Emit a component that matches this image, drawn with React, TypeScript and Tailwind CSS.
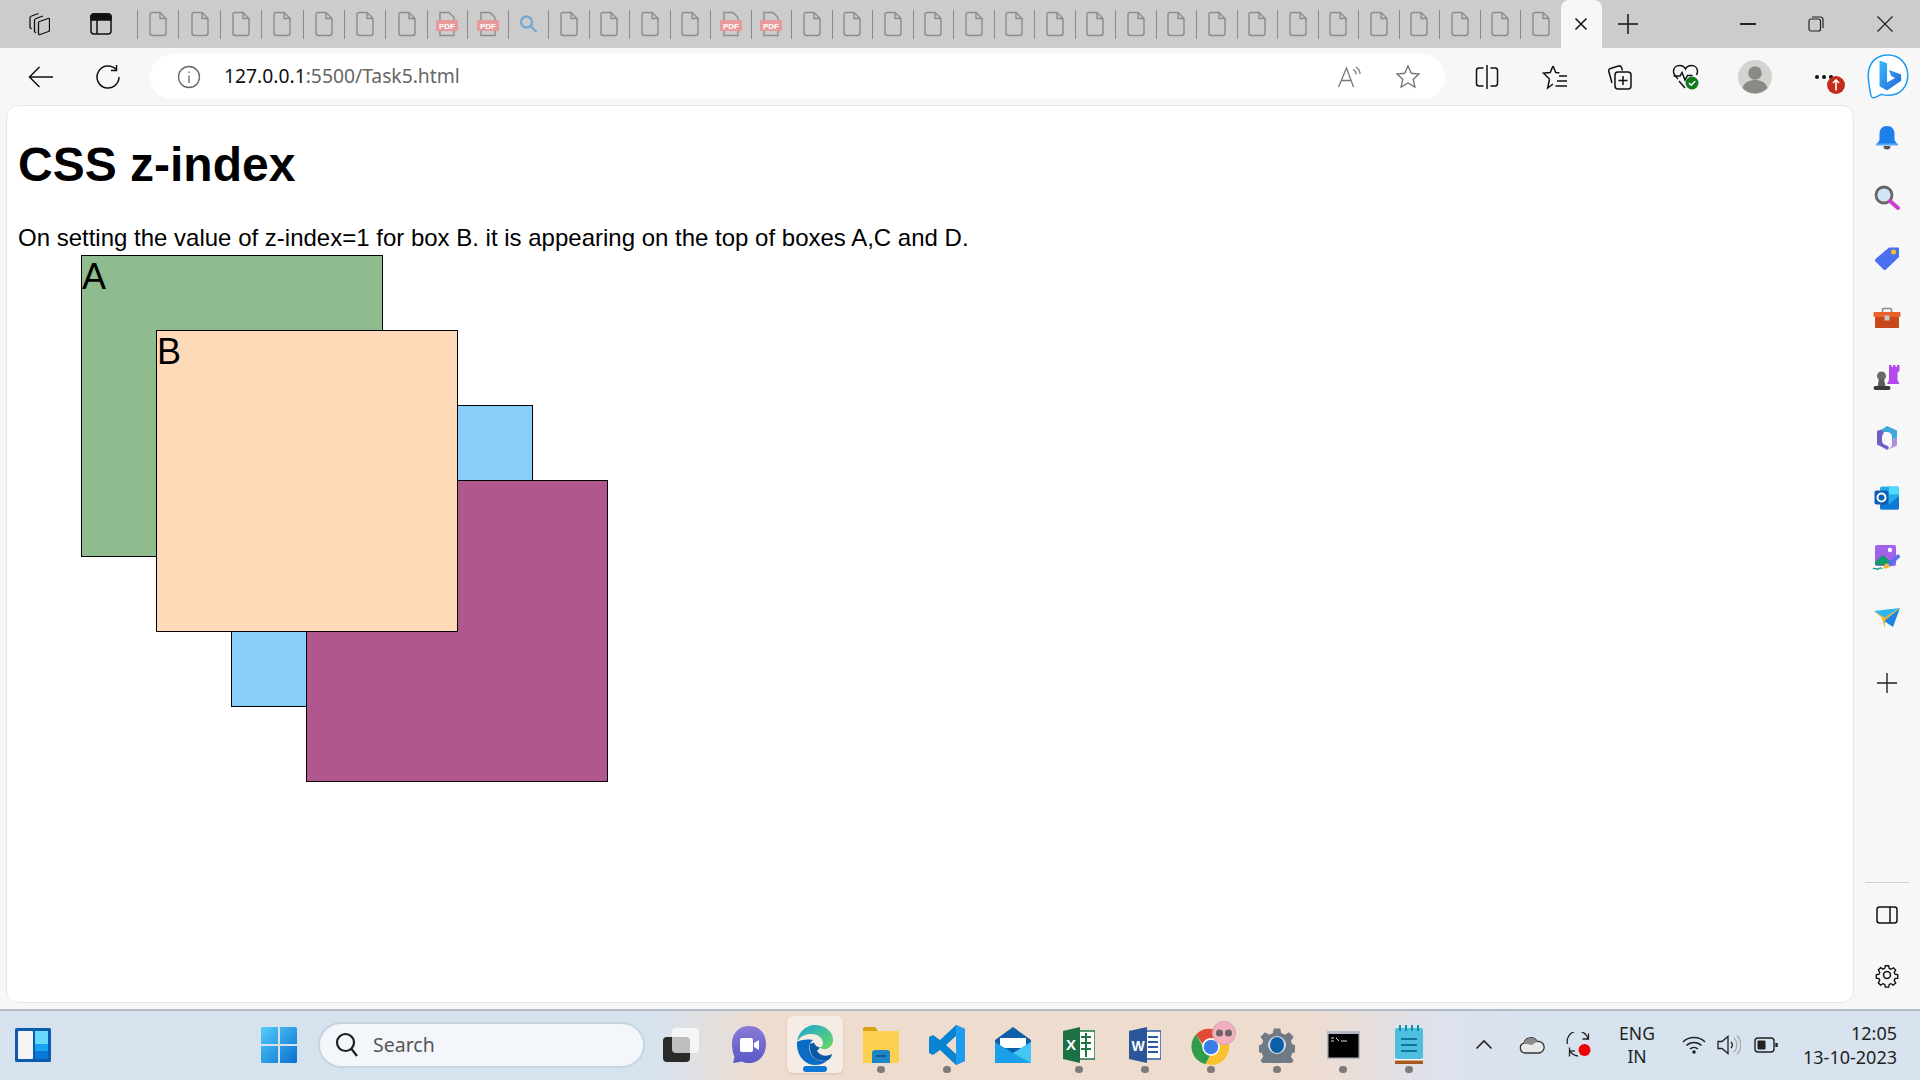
const ui = { fontFamily: '"Noto Sans", "Open Sans", sans-serif' }

type Tab = 'file' | 'pdf' | 'find'
const tabs: Tab[] = [
  ...Array<Tab>(7).fill('file'),
  'pdf',
  'pdf',
  'find',
  ...Array<Tab>(4).fill('file'),
  'pdf',
  'pdf',
  ...Array<Tab>(19).fill('file'),
]

function FileIcon() {
  return (
    <svg width="20" height="26" viewBox="0 0 20 26" fill="none" stroke="#8c8c8c" strokeWidth="1.4">
      <path d="M4 1.500h8l6 6V22a2.500 2.500 0 0 1-2.500 2.500h-11A2.500 2.500 0 0 1 2 22V3.500a2 2 0 0 1 2-2z" />
      <path d="M12 1.500v6h6" />
    </svg>
  )
}

function PdfIcon() {
  return (
    <svg width="24" height="26" viewBox="0 0 24 26" fill="none">
      <path d="M5 1.500h9l5 5V24.500H5z" stroke="#8c8c8c" strokeWidth="1.4" />
      <rect x="1" y="9" width="22" height="11" rx="1" fill="#e89a9a" />
      <text x="12" y="17.500" textAnchor="middle" fontSize="8" fontWeight="700" fill="#fff" fontFamily="Liberation Sans">PDF</text>
    </svg>
  )
}

function FindIcon() {
  return (
    <svg width="20" height="22" viewBox="0 0 20 22" fill="none" stroke="#78a9d1" strokeWidth="2.4">
      <circle cx="8.500" cy="9" r="5.500" />
      <path d="M13 13.500l5 5" strokeLinecap="round" />
    </svg>
  )
}

function TabStrip() {
  return (
    <div className="flex h-12 items-center bg-[#cccccc]">
      <div className="flex w-[137px] items-center gap-[40px] pl-[26px]">
        <svg width="24" height="24" viewBox="0 0 24 24" fill="none" stroke="#111" strokeWidth="1.300">
          <path d="M13.500 9.500L22 6.500c1-.3 1.500.2 1.500 1V18c0 .8-.4 1.300-1 1.500L14 22.500c-1 .3-1.500-.2-1.500-1V11c0-.8.3-1.200 1-1.500z" />
          <path d="M10 21L8.500 19.500V8.500c0-1 .5-1.700 1.500-2L17 4" />
          <path d="M5.500 17L4 15.500V6c0-1 .5-1.700 1.500-2L12.500 1.500" />
        </svg>
        <svg width="22" height="22" viewBox="0 0 22 22" fill="none" stroke="#111" strokeWidth="1.500">
          <rect x="1" y="1" width="20" height="20" rx="3" />
          <path d="M1 3.500a2.500 2.500 0 0 1 2.500-2.500h15A2.500 2.500 0 0 1 21 3.500V7H1z" fill="#111" />
          <path d="M7 7v14" />
        </svg>
      </div>
      <div className="flex h-full">
        {tabs.map((t, i) => (
          <div key={i} className={`flex h-full items-center ${i < 7 ? 'w-[41.4px]' : 'w-[40.5px]'}`}>
            <div className="h-[29px] w-px bg-[#8b8b8b]" />
            <div className="flex flex-1 justify-center">
              {t === 'file' && <FileIcon />}
              {t === 'pdf' && <PdfIcon />}
              {t === 'find' && <FindIcon />}
            </div>
          </div>
        ))}
      </div>
      <div className="flex h-full w-[41px] items-center justify-center rounded-t-lg bg-[#f7f7f7]">
        <svg width="14" height="14" viewBox="0 0 14 14" stroke="#111" strokeWidth="1.500">
          <path d="M1.500 1.500l11 11M12.500 1.500l-11 11" />
        </svg>
      </div>
      <div className="flex w-[52px] justify-center">
        <svg width="22" height="22" viewBox="0 0 22 22" stroke="#111" strokeWidth="1.500">
          <path d="M11 1v20M1 11h20" />
        </svg>
      </div>
      <div className="ml-[67px] flex w-[54px] justify-center">
        <div className="h-[1.500px] w-[16px] bg-[#222]" />
      </div>
      <div className="ml-[14px] flex w-[54px] justify-center">
        <svg width="16" height="16" viewBox="0 0 16 16" fill="none" stroke="#222" strokeWidth="1.200">
          <rect x="1" y="3" width="11.500" height="12" rx="2" />
          <path d="M4 1h8.500A2.500 2.500 0 0 1 15 3.500V12" />
        </svg>
      </div>
      <div className="ml-[15px] flex w-[54px] justify-center">
        <svg width="18" height="18" viewBox="0 0 18 18" stroke="#222" strokeWidth="1.200">
          <path d="M1.500 1.500l15 15M16.500 1.500l-15 15" />
        </svg>
      </div>
    </div>
  )
}

function ToolBar() {
  return (
    <div className="flex h-[57px] items-start bg-[#f7f7f7] pt-[6px]">
      <div className="flex h-[45px] w-[82px] items-center justify-center">
        <svg width="26" height="24" viewBox="0 0 26 24" fill="none" stroke="#111" strokeWidth="1.500">
          <path d="M25 12H2M11.500 2L1.500 12l10 10" />
        </svg>
      </div>
      <div className="flex h-[45px] w-[52px] items-center justify-center">
        <svg width="26" height="26" viewBox="0 0 26 26" fill="none" stroke="#111" strokeWidth="1.500">
          <path d="M21 5.500A11 11 0 1 0 24 13" />
          <path d="M21.500 1v5.500H16" />
        </svg>
      </div>
      <div className="ml-[16px] flex h-[45px] w-[1295px] items-center rounded-full bg-white pl-[27px] pr-[24px]">
        <svg width="24" height="24" viewBox="0 0 24 24" fill="none" stroke="#666" strokeWidth="1.300">
          <circle cx="12" cy="12" r="10.500" />
          <path d="M12 10.500V18" />
          <path d="M12 6.500v1.500" />
        </svg>
        <div className="ml-[23px] flex-1 text-[19.300px] text-[#666]" style={ui}>
          <span className="text-[#111]">127.0.0.1</span>:5500/Task5.html
        </div>
        <svg width="26" height="24" viewBox="0 0 26 24" fill="none" stroke="#777" strokeWidth="1.300">
          <path d="M1.500 22L9.500 3l7 19M4.500 15.500h10" />
          <path d="M16 4.500a5 5 0 0 1 3 5M19 2a8.500 8.500 0 0 1 4 7" />
        </svg>
        <svg className="ml-[32px]" width="26" height="25" viewBox="0 0 26 25" fill="none" stroke="#777" strokeWidth="1.400">
          <path d="M13 2l3.300 7.300 7.700.8-5.800 5.200 1.700 7.700L13 19l-6.900 4 1.700-7.700L2 10.100l7.700-.8z" />
        </svg>
      </div>
      <div className="flex h-[45px] w-[84px] items-center justify-center">
        <svg width="24" height="26" viewBox="0 0 24 26" fill="none" stroke="#111" strokeWidth="1.500">
          <path d="M12 1v24" />
          <path d="M8.500 4H4a2.500 2.500 0 0 0-2.500 2.500v13A2.500 2.500 0 0 0 4 22h4.500" />
          <path d="M15.500 4H20a2.500 2.500 0 0 1 2.500 2.500v13A2.500 2.500 0 0 1 20 22h-4.500" />
        </svg>
      </div>
      <div className="flex h-[45px] w-[52px] items-center justify-center">
        <svg width="26" height="26" viewBox="0 0 26 26" fill="none" stroke="#111" strokeWidth="1.500">
          <path d="M11 2l2.800 6.500 3.700.3M7.500 15l-1.800 9L11 20M11 2L8.200 8.500 1.500 9.200l6 5.800" />
          <path d="M17 12h8M15 17h10M13.500 22h11.500" />
        </svg>
      </div>
      <div className="flex h-[45px] w-[78px] items-center justify-center">
        <svg width="26" height="28" viewBox="0 0 26 28" fill="none" stroke="#111" strokeWidth="1.500">
          <rect x="8" y="9" width="16" height="17" rx="3" />
          <path d="M16 13v9M11.500 17.500h9" />
          <path d="M5 20L1.800 8.500c-.4-1.500.3-2.700 1.700-3l8-2.500c1.400-.4 2.500.3 3 1.500l1 3" />
        </svg>
      </div>
      <div className="flex h-[45px] w-[54px] items-center justify-center">
        <svg width="28" height="28" viewBox="0 0 28 28" fill="none">
          <path d="M6 16C3 13 1.500 11.500 1.500 8.500 1.500 5 4 2.500 7.500 2.500c2.500 0 5 1.500 6 3.500 1-2 3.500-3.500 6-3.500 3.500 0 6 2.500 6 6 0 1.500-.5 2.500-1 3.500" stroke="#111" strokeWidth="1.500" />
          <path d="M1.500 13H8l2-3.500 3 7.500 2.500-4.500h5M7 18l6 7" stroke="#111" strokeWidth="1.500" />
          <circle cx="20" cy="20" r="6.500" fill="#0f7b1d" />
          <path d="M17 20l2.200 2.200 4-4" stroke="#fff" strokeWidth="1.500" />
        </svg>
      </div>
      <div className="flex h-[45px] w-[84px] items-center justify-center">
        <svg width="34" height="34" viewBox="0 0 34 34">
          <circle cx="17" cy="17" r="17" fill="#d5d3cf" />
          <circle cx="17" cy="13" r="6.800" fill="#8b8986" />
          <path d="M4.500 28c2-6 7-8 12.500-8s10.500 2 12.500 8A17 17 0 0 1 4.500 28z" fill="#8b8986" />
        </svg>
      </div>
      <div className="relative flex h-[45px] w-[36px] items-center justify-end">
        <div className="flex gap-[3px]">
          <div className="h-[4px] w-[4px] rounded-full bg-[#111]" />
          <div className="h-[4px] w-[4px] rounded-full bg-[#111]" />
          <div className="h-[4px] w-[4px] rounded-full bg-[#111]" />
        </div>
        <div className="absolute left-[30px] top-[22px] flex h-[18px] w-[18px] items-center justify-center rounded-full bg-[#c42b1c]">
          <svg width="8" height="12" viewBox="0 0 8 12" fill="none" stroke="#fff" strokeWidth="1.600">
            <path d="M4 11.500V1M1 4l3-3 3 3" />
          </svg>
        </div>
      </div>
      <div className="ml-[27px] flex h-[45px] w-[56px] items-center justify-center">
        <svg width="46" height="47" viewBox="0 0 46 50">
          <defs>
            <linearGradient id="bingFill" x1="0" y1="0" x2="1" y2="1">
              <stop offset="0" stopColor="#37bdf8" />
              <stop offset="1" stopColor="#2563d9" />
            </linearGradient>
          </defs>
          <path d="M23 2C10 2 2 11 2 24c0 8 2 17 3 22 1 2 3 2 5 1l6-3c2 .5 4.500 1 7 1 13 0 21-9 21-21S36 2 23 2z" fill="#fff" stroke="#1d9bf0" strokeWidth="1.600" />
          <path d="M14 8l8 2.800v20.700l8.500-5-4-2-2.500-6.500 13 5v6.500L22 40l-8-4.500z" fill="url(#bingFill)" />
        </svg>
      </div>
    </div>
  )
}

function Box({ label, className }: { label?: string; className: string }) {
  return (
    <div className={`col-start-1 row-start-1 h-[302px] w-[302px] border border-black text-[36px] leading-[41px] ${className}`}>
      {label}
    </div>
  )
}

function Page() {
  return (
    <div className="mb-[6px] ml-[6px] w-[1848px] rounded-xl border border-[#e6e6e6] bg-white pl-[11px]" style={{ fontFamily: '"Liberation Sans", Arial, sans-serif' }}>
      <h1 className="mt-[31px] text-[48px] font-bold leading-[55px] text-black">CSS z-index</h1>
      <p className="mt-[32px] text-[24px] leading-[28px] text-black">
        On setting the value of z-index=1 for box B. it is appearing on the top of boxes A,C and D.
      </p>
      <div className="mt-[3px] grid w-fit">
        <Box label="A" className="ml-[63px] bg-[#8fbc8f]" />
        <Box className="ml-[213px] mt-[150px] bg-[#87cefa]" />
        <Box className="ml-[288px] mt-[225px] bg-[#b0578d]" />
        <Box label="B" className="relative z-10 ml-[138px] mt-[75px] bg-[#ffdab9]" />
      </div>
    </div>
  )
}

function SideIcon({ children }: { children: React.ReactNode }) {
  return <div className="flex h-[60px] items-center justify-center">{children}</div>
}

function SideBar() {
  return (
    <div className="flex w-[66px] flex-col bg-[#f7f7f7] pt-[3px]">
      <SideIcon>
        <svg width="24" height="26" viewBox="0 0 24 26">
          <path d="M12 1c-5 0-7.500 3.500-7.500 8v6L2 19h20l-2.500-4V9c0-4.500-2.500-8-7.500-8z" fill="#1d80ea" />
          <rect x="1" y="18.500" width="22" height="2" fill="#5aa6f2" />
          <path d="M8.500 21a3.500 3.500 0 0 0 7 0z" fill="#555" />
        </svg>
      </SideIcon>
      <SideIcon>
        <svg width="26" height="26" viewBox="0 0 26 26">
          <circle cx="10" cy="10" r="8" fill="#cfe6f5" stroke="#666" strokeWidth="2.800" />
          <path d="M16 16l8 7" stroke="#c93fd0" strokeWidth="4" strokeLinecap="round" />
        </svg>
      </SideIcon>
      <SideIcon>
        <svg width="26" height="26" viewBox="0 0 26 26">
          <path d="M15 2.500h9a1 1 0 0 1 1 1V12L12 24.500a2 2 0 0 1-2.500 0L1.500 16.500a2 2 0 0 1 0-2.500z" fill="#4b6ff0" />
          <circle cx="19.500" cy="7" r="2.500" fill="#f6c21c" />
        </svg>
      </SideIcon>
      <SideIcon>
        <svg width="28" height="22" viewBox="0 0 28 22">
          <path d="M9.500 5V2.500a1 1 0 0 1 1-1h7a1 1 0 0 1 1 1V5" fill="none" stroke="#8c8c8c" strokeWidth="1.600" />
          <rect x="0.500" y="5" width="27" height="5" rx="1" fill="#e8622c" />
          <rect x="2" y="10" width="24" height="11" rx="1" fill="#c8471b" />
          <rect x="11.500" y="8.500" width="5" height="5" fill="#c9c9c9" />
        </svg>
      </SideIcon>
      <SideIcon>
        <svg width="28" height="28" viewBox="0 0 28 28">
          <path d="M16 1h2.500v2H20V1h2.500v2H24V1h2.500v6l-2 1.500V16l2 4H14l2-4V8.500L16 7z" fill="#b348ec" />
          <circle cx="8.500" cy="12" r="4.500" fill="#6a6a6a" />
          <path d="M6 15h5l1.500 7.500h-8z" fill="#5a5a5a" />
          <rect x="0.500" y="22" width="17" height="4" rx="2" fill="#3a3a3a" />
        </svg>
      </SideIcon>
      <SideIcon>
        <svg width="26" height="26" viewBox="0 0 26 26">
          <path d="M13 1l10 4.500v7l-5 2.500v-3.500a5 5 0 0 0-5-4.500H8l-1-2z" fill="#3fa7dc" />
          <path d="M23 12.500v8L13 25l-3-1.500h5a5 5 0 0 0 3-4.500v-4z" fill="#b28ee0" />
          <path d="M3 6l4-1.500 3 3.500a5 5 0 0 0-2 4v3.500a5 5 0 0 0 5 5l2 2-2 2-10-5V6z" fill="#6f5fc4" />
        </svg>
      </SideIcon>
      <SideIcon>
        <svg width="26" height="26" viewBox="0 0 26 26">
          <rect x="6" y="1.500" width="19" height="23" rx="2" fill="#28a8ea" />
          <rect x="15" y="1.500" width="10" height="8" fill="#50d9ff" />
          <path d="M6 13l9.500 6L25 11v12a1.500 1.500 0 0 1-1.500 1.500H7.500A1.500 1.500 0 0 1 6 23z" fill="#0f78d4" />
          <rect x="0.500" y="5.500" width="14" height="14" rx="2" fill="#0a5fb4" />
          <circle cx="7.500" cy="12.500" r="4" fill="none" stroke="#fff" strokeWidth="2" />
        </svg>
      </SideIcon>
      <SideIcon>
        <svg width="30" height="28" viewBox="0 0 30 28">
          <rect x="3" y="1" width="21" height="21" rx="2" fill="#a162ea" />
          <path d="M3 18l8-7 8 7v3H3z" fill="#0e9a6c" />
          <circle cx="18" cy="6" r="2.200" fill="#fff" />
          <path d="M15 20l11-10 2.500 2.500L18 23z" fill="#5570e8" />
          <path d="M13 20c2-1 4 0 5 2-2 3-5 3-7 2 1-1 1-3 2-4z" fill="#f1b53a" />
          <path d="M1 25c2-2 3 1 5 0s3-2 4 0" fill="none" stroke="#10a37f" strokeWidth="1.400" />
        </svg>
      </SideIcon>
      <SideIcon>
        <svg width="28" height="22" viewBox="0 0 28 22">
          <path d="M1 4L27 1 11 11z" fill="#2eb5f0" />
          <path d="M27 1L20 20 11 14z" fill="#1a86e0" />
          <path d="M11 11l16-10L11 14l1 7-3-10z" fill="#f0a21c" />
          <path d="M1 4l8 7 3 10 0-10z" fill="#f7b733" />
        </svg>
      </SideIcon>
      <div className="mt-[5px]">
        <SideIcon>
          <svg width="20" height="20" viewBox="0 0 20 20" stroke="#222" strokeWidth="1.400">
            <path d="M10 0v20M0 10h20" />
          </svg>
        </SideIcon>
      </div>
      <div className="mx-[11px] mt-[169px] h-px bg-[#cfcfcf]" />
      <div className="mt-[2px]">
        <SideIcon>
          <svg width="22" height="20" viewBox="0 0 22 20" fill="none" stroke="#111" strokeWidth="1.500">
            <rect x="1" y="2" width="20" height="16" rx="2.500" />
            <path d="M14 2v16" />
          </svg>
        </SideIcon>
        <SideIcon>
          <svg width="26" height="26" viewBox="0 0 24 24" fill="none" stroke="#111" strokeWidth="1.400">
            <circle cx="12" cy="12" r="3.200" />
            <path d="M10.300 2.500h3.400l.6 2.800 1.800.8 2.500-1.500 2.300 2.400-1.500 2.400.8 1.800 2.800.6v3.400l-2.800.6-.8 1.800 1.500 2.500-2.400 2.300-2.400-1.500-1.800.8-.6 2.800h-3.400l-.6-2.800-1.800-.8-2.500 1.500-2.300-2.400 1.500-2.400-.8-1.800-2.800-.6v-3.400l2.800-.6.8-1.800L3.100 6.800l2.400-2.300 2.400 1.500 1.800-.8z" transform="translate(1.200 1.200) scale(.9)" />
          </svg>
        </SideIcon>
      </div>
    </div>
  )
}

function AppSlot({ dot, active, children }: { dot?: boolean; active?: boolean; children: React.ReactNode }) {
  return (
    <div className="relative flex h-full w-[66px] items-center justify-center">
      {active && <div className="absolute left-[5px] top-[5px] h-[57px] w-[56px] rounded-md bg-[#f5ece6] shadow-sm" />}
      <div className="relative flex">{children}</div>
      {dot && <div className="absolute left-[29px] top-[55px] h-[7px] w-[8px] rounded-full bg-[#7d7b79]" />}
      {active && <div className="absolute left-[21px] top-[55px] h-[6px] w-[24px] rounded-full bg-[#0f78d4]" />}
    </div>
  )
}

function TaskBar() {
  return (
    <div className="flex h-[71px] items-center border-t-2 border-[#b2bdc9] bg-[linear-gradient(90deg,#d6e3ef_0%,#d6e3ef_34%,#eedcce_40%,#eedcce_68%,#dde2ee_75%,#d6e3ef_82%,#d8e3ef_100%)] pb-[2px]" style={ui}>
      <div className="ml-[15px] flex w-[36px] justify-center">
        <svg width="36" height="34" viewBox="0 0 36 34">
          <rect width="36" height="34" rx="1.500" fill="#0b5cad" />
          <rect x="3" y="3" width="15" height="28" rx="1" fill="#f4f4f4" />
          <rect x="20" y="3" width="13" height="13" fill="#66d9ff" />
          <rect x="20" y="16" width="13" height="7" fill="#18a4f3" />
          <rect x="20" y="23" width="13" height="8" fill="#0a78d8" />
        </svg>
      </div>
      <div className="ml-[210px] flex w-[36px] justify-center">
        <svg width="36" height="36" viewBox="0 0 36 36">
          <defs>
            <linearGradient id="winA" x1="0" y1="0" x2="1" y2="1">
              <stop offset="0" stopColor="#52cdfb" />
              <stop offset="1" stopColor="#0a6fd0" />
            </linearGradient>
          </defs>
          <path d="M0 1.500A1.500 1.500 0 0 1 1.500 0H17v17H0zM19 0h15.500A1.500 1.500 0 0 1 36 1.500V17H19zM0 19h17v17H1.500A1.500 1.500 0 0 1 0 34.500zM19 19h17v15.500a1.500 1.500 0 0 1-1.500 1.500H19z" fill="url(#winA)" />
        </svg>
      </div>
      <div className="ml-[21px] flex h-[46px] w-[327px] items-center rounded-full border-2 border-[#c6d3e0] bg-[#f3f7fb] pl-[15px]">
        <svg width="24" height="26" viewBox="0 0 24 26" fill="none" stroke="#1c1c1c" strokeWidth="2.200">
          <circle cx="10.500" cy="10.500" r="8.500" />
          <path d="M16.500 17l5.500 7" />
        </svg>
        <span className="ml-[14px] text-[19.500px] text-[#555]">Search</span>
      </div>
      <div className="flex h-full w-[66px] items-center justify-center">
        <div className="relative ml-[6px] h-[34px] w-[36px]">
          <div className="absolute bottom-0 left-0 h-[25px] w-[27px] rounded-sm bg-[#2a2a2a]" />
          <div className="absolute right-0 top-0 h-[25px] w-[27px] rounded-sm bg-white/70" />
        </div>
      </div>
      <div className="ml-[5px] flex h-full">
        <AppSlot>
          <svg width="34" height="38" viewBox="0 0 34 38">
            <defs>
              <linearGradient id="chatG" x1="0" y1="0" x2="0" y2="1">
                <stop offset="0" stopColor="#8a7bd6" />
                <stop offset="1" stopColor="#5a58c8" />
              </linearGradient>
            </defs>
            <path d="M17 0c10 0 17 7 17 18s-7 19-17 19c-3 0-5-.5-7-1.500L2 37c-1 0-1-1-.5-2l1-4C1 27 0 23 0 18 0 7 7 0 17 0z" fill="url(#chatG)" />
            <rect x="8" y="12" width="13" height="14" rx="2" fill="#fff" />
            <path d="M22 17l5-3v10l-5-3z" fill="#fff" />
          </svg>
        </AppSlot>
        <AppSlot active>
          <svg width="36" height="40" viewBox="0 0 36 40">
            <defs>
              <linearGradient id="edgeTop" x1="0" y1="0" x2="1" y2="1">
                <stop offset="0" stopColor="#1aa5d8" />
                <stop offset="1" stopColor="#6bd960" />
              </linearGradient>
            </defs>
            <path d="M18 0C8 0 1 8 0 17c3-6 9-8 14-8 8 0 12 5 12 9 0 2-1 3.500-3 4.500 3 3 9 2 12-3 1-2 1-4 1-5C36 7 28 0 18 0z" fill="url(#edgeTop)" />
            <path d="M0 17c-1 13 8 23 18 23 5 0 10-2 13-5-7 2-14 0-17-6-3-5-2-11 2-14-7-1-13 0-16 2z" fill="#0c6cc4" />
            <path d="M13 19c-1 6 1 12 6 15 4 2 9 2 12 1 2-1 4-4 4-6-5 3-12 2-15-3l3-3.500c-3-.5-5-2-6-5z" fill="#0a58a5" />
          </svg>
        </AppSlot>
        <AppSlot dot>
          <svg width="36" height="36" viewBox="0 0 36 36">
            <path d="M0 2a2 2 0 0 1 2-2h10l3 4H0z" fill="#d9a010" />
            <path d="M0 4h35a1 1 0 0 1 1 1v31H0z" fill="#fdd04f" />
            <path d="M9 36V26a3 3 0 0 1 3-3h12a3 3 0 0 1 3 3v10z" fill="#1b86c8" />
            <rect x="13" y="28" width="10" height="2" fill="#0b5a94" />
          </svg>
        </AppSlot>
        <AppSlot dot>
          <svg width="36" height="40" viewBox="0 0 36 40">
            <path d="M27 0l9 4v32l-9 4-16-15-7 5-4-2V12l4-2 7 5zM27 11l-10 9 10 9z" fill="#0a84d2" />
            <path d="M27 0l9 4v32l-9 4z" fill="#1f9cf0" />
          </svg>
        </AppSlot>
        <AppSlot>
          <svg width="36" height="36" viewBox="0 0 36 36">
            <path d="M0 13L18 0l18 13v23H0z" fill="#0f5ea9" />
            <path d="M5 11h26v10H5z" fill="#fff" />
            <path d="M0 15l18 11 18-11v21H0z" fill="#1aa0e8" />
            <path d="M18 26l18-11v21z" fill="#45c7f5" />
          </svg>
        </AppSlot>
        <AppSlot dot>
          <svg width="32" height="36" viewBox="0 0 32 36">
            <rect x="14" y="4" width="18" height="28" fill="#fff" stroke="#1f7244" strokeWidth="1.500" />
            <path d="M18 10h10M18 16h10M18 22h10M23 6v24" stroke="#1f7244" strokeWidth="2" />
            <path d="M0 4l17-4v36L0 32z" fill="#1d7044" />
            <text x="8" y="23" textAnchor="middle" fontSize="15" fontWeight="700" fill="#fff" fontFamily="Liberation Sans">X</text>
          </svg>
        </AppSlot>
        <AppSlot dot>
          <svg width="32" height="36" viewBox="0 0 32 36">
            <rect x="14" y="4" width="18" height="28" fill="#fff" stroke="#2b5aa6" strokeWidth="1.500" />
            <path d="M19 10h10M19 15h10M19 20h10M19 25h10" stroke="#2b5aa6" strokeWidth="2" />
            <path d="M0 4l18-4v36L0 32z" fill="#2b579a" />
            <text x="9" y="24" textAnchor="middle" fontSize="14" fontWeight="700" fill="#fff" fontFamily="Liberation Sans">W</text>
          </svg>
        </AppSlot>
        <AppSlot dot>
          <svg width="50" height="50" viewBox="0 0 50 50" className="-my-[3px]">
            <path d="M25 9a18 18 0 0 1 15.600 9H25a9 9 0 0 0-8.500 6L10 14.500A18 18 0 0 1 25 9z" fill="#e14a34" />
            <path d="M10 14.500l9 15.500a9 9 0 0 0 6 4L19.500 44A18 18 0 0 1 10 14.500z" fill="#2e9e4c" />
            <path d="M40.600 18A18 18 0 0 1 25 45l-5.500-1 8.800-14.500a9 9 0 0 0 3-11.500z" fill="#fbc02d" />
            <circle cx="25" cy="27" r="8" fill="#3b7de8" stroke="#fff" strokeWidth="1.500" />
            <circle cx="38" cy="13" r="11.500" fill="#f4afc0" stroke="#c9a3ac" strokeWidth="1" />
            <circle cx="33.500" cy="13" r="3.500" fill="#6a6468" />
            <circle cx="42.500" cy="13" r="3.500" fill="#6a6468" />
          </svg>
        </AppSlot>
        <AppSlot dot>
          <svg width="36" height="36" viewBox="0 0 36 36">
            <path d="M14.500 0h7l1 5 4 1.800 4.500-2.800 5 5-3 4.500 1.700 4 5 1v7l-5 1-1.700 4 3 4.500-5 5-4.500-3-4 1.800-1 5h-7l-1-5-4-1.800-4.500 3-5-5 3-4.500-1.700-4-5-1v-7l5-1 1.700-4-3-4.500 5-5 4.500 2.800 4-1.800z" transform="translate(1.500 1.500) scale(.92)" fill="#6f7a85" />
            <circle cx="18" cy="18" r="9" fill="#d5dde6" />
            <ellipse cx="18" cy="18" rx="7" ry="8" fill="#0d5fa8" />
          </svg>
        </AppSlot>
        <AppSlot dot>
          <svg width="33" height="28" viewBox="0 0 33 28">
            <rect width="33" height="28" fill="#b3b9c1" />
            <rect x="1.500" y="3" width="30" height="23.500" fill="#000" />
            <path d="M4 7h3M4 10h3M9 7l3 3M14 10h6" stroke="#ddd" strokeWidth="1" />
          </svg>
        </AppSlot>
        <AppSlot dot>
          <svg width="28" height="40" viewBox="0 0 28 40">
            <rect y="3" width="28" height="31" rx="2" fill="#4dbfdf" />
            <path d="M0 34h28v5H0z" fill="#a85a1e" />
            <path d="M0 34h28v1.500H0z" fill="#fff" />
            <path d="M5 0v6M11 0v6M17 0v6M23 0v6" stroke="#0f8db0" strokeWidth="2" />
            <path d="M6 14h16M6 20h16M6 26h16" stroke="#1273a0" strokeWidth="2" />
          </svg>
        </AppSlot>
      </div>
      <div className="ml-[27px] flex w-[30px] justify-center">
        <svg width="18" height="11" viewBox="0 0 18 11" fill="none" stroke="#222" strokeWidth="1.600">
          <path d="M1.500 9.500L9 2l7.500 7.500" />
        </svg>
      </div>
      <div className="ml-[18px] flex w-[30px] justify-center">
        <svg width="26" height="18" viewBox="0 0 26 18">
          <path d="M6 17a5 5 0 0 1-1-9.800A7 7 0 0 1 18 5.500 5.500 5.500 0 0 1 20.500 17z" fill="#e8e8e8" stroke="#333" strokeWidth="1.300" />
          <path d="M5 7.500A7 7 0 0 1 18 5.500L13 9z" fill="#8c8c8c" />
        </svg>
      </div>
      <div className="ml-[17px] flex w-[30px] justify-center">
        <svg width="26" height="26" viewBox="0 0 26 26" fill="none" stroke="#222" strokeWidth="1.300">
          <path d="M1.500 12A10.500 10.500 0 0 1 22 7" />
          <path d="M22.500 1.500V7h-6" />
          <path d="M3.500 15.500v9M3.500 18A10.500 10.500 0 0 0 12 24" />
          <path d="M3 19h6" />
          <circle cx="18.500" cy="18" r="6" fill="#f00000" stroke="none" />
        </svg>
      </div>
      <div className="ml-[13px] w-[60px] text-center text-[17.500px] leading-[23px] text-[#1f1f1f]">
        <div>ENG</div>
        <div>IN</div>
      </div>
      <div className="ml-[12px] flex w-[30px] justify-center">
        <svg width="24" height="18" viewBox="0 0 24 18" fill="none" stroke="#222" strokeWidth="1.500">
          <path d="M1 6a16 16 0 0 1 22 0M4.500 9.500a11 11 0 0 1 15 0M8 13a6 6 0 0 1 8 0" />
          <circle cx="12" cy="16" r="1.800" fill="#222" stroke="none" />
        </svg>
      </div>
      <div className="ml-[5px] flex w-[30px] justify-center">
        <svg width="24" height="22" viewBox="0 0 24 22" fill="none" stroke="#222" strokeWidth="1.300">
          <path d="M1 7.500h4L11 2.500v17l-6-5H1z" />
          <path d="M14 8a4.500 4.500 0 0 1 0 6" />
          <path d="M17 4a10 10 0 0 1 0 14M20 1.500a14 14 0 0 1 0 19" stroke="#a8a8a8" />
        </svg>
      </div>
      <div className="ml-[7px] flex w-[30px] justify-center">
        <svg width="24" height="16" viewBox="0 0 24 16" fill="none" stroke="#222" strokeWidth="1.400">
          <rect x="1" y="1" width="19" height="14" rx="3" />
          <rect x="3.500" y="3.500" width="8" height="9" rx="1" fill="#222" stroke="none" />
          <path d="M22.500 6v4" strokeWidth="2.400" />
        </svg>
      </div>
      <div className="flex-1 pr-[23px] text-right text-[18px] leading-[24px] text-[#1f1f1f]">
        <div>12:05</div>
        <div>13-10-2023</div>
      </div>
    </div>
  )
}

export default function App() {
  return (
    <div className="flex h-[1080px] w-[1920px] flex-col overflow-hidden bg-[#f7f7f7]">
      <TabStrip />
      <ToolBar />
      <div className="flex h-[904px]">
        <Page />
        <SideBar />
      </div>
      <TaskBar />
    </div>
  )
}
